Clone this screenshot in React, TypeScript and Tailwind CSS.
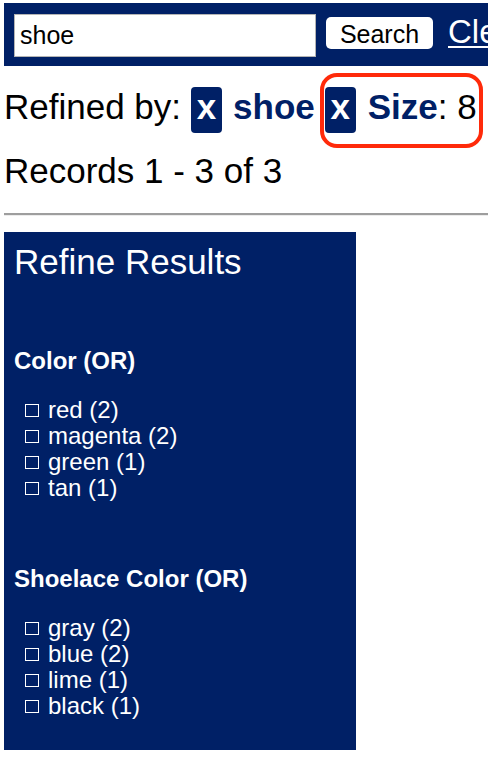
import React from "react";

const navy = "bg-[#002066]";

const colorFacets = [
  { label: "red", count: 2 },
  { label: "magenta", count: 2 },
  { label: "green", count: 1 },
  { label: "tan", count: 1 },
];

const laceFacets = [
  { label: "gray", count: 2 },
  { label: "blue", count: 2 },
  { label: "lime", count: 1 },
  { label: "black", count: 1 },
];

const FacetList = ({ items }: { items: { label: string; count: number }[] }) => (
  <ul className="mt-[22px]">
    {items.map((item) => (
      <li key={item.label} className="flex items-center h-[26px] text-[24px] leading-[26px] text-white">
        <span className="ml-[11px] mr-[9px] w-[14px] h-[13px] border border-white shrink-0" />
        <span>
          {item.label} ({item.count})
        </span>
      </li>
    ))}
  </ul>
);

const Badge = ({ className = "" }: { className?: string }) => (
  <span
    className={`${navy} ${className} block w-[31px] h-[46px] rounded-[4px] text-white font-bold text-center text-[35px] leading-[40px]`}
  >
    x
  </span>
);

export default function App() {
  return (
    <div
      className="w-full min-h-screen overflow-hidden bg-white pl-[4px] pt-[3px] text-black whitespace-nowrap"
      style={{ fontFamily: '"Liberation Sans", Arial, sans-serif' }}
    >
      {/* search bar */}
      <div className={`${navy} h-[63px] flex items-start overflow-hidden`}>
        <input
          readOnly
          value="shoe"
          className="ml-[10px] mt-[11px] w-[302px] h-[43px] shrink-0 bg-white border-[1.5px] border-[#b4b4b4] px-[5px] text-[25px] text-black outline-none"
        />
        <button className="ml-[10px] mt-[14px] w-[107px] h-[32px] shrink-0 bg-white rounded-[5px] text-[25px] leading-[34px] text-black">
          Search
        </button>
        <a href="#" className="ml-[15px] mt-[9px] text-[33px] leading-[40px] text-white underline underline-offset-[3px] decoration-[2px]">
          Clear
        </a>
      </div>

      {/* refined by */}
      <div className="relative mt-[21px] flex items-start text-[35px] leading-[40px]">
        <span>Refined by:</span>
        <Badge className="ml-[10px]" />
        <span className="ml-[11px] font-bold text-[#002066]">shoe</span>
        <Badge className="ml-[10px]" />
        <span className="ml-[12px]">
          <b className="text-[#002066]">Size</b>: 8
        </span>
        <div className="absolute left-[316px] top-[-14px] w-[163px] h-[75px] border-[4px] border-[#ff2a0a] rounded-[17px]" />
      </div>

      <div className="mt-[18px] text-[35px] leading-[40px]">Records 1 - 3 of 3</div>

      <div className="mt-[22px] h-[3px] border-t-2 border-[#9e9e9e] border-b border-b-[#ececec]" />

      {/* refine panel */}
      <div className={`${navy} mt-[16px] w-[352px] px-[10px] pt-[10px] pb-[31px] text-white`}>
        <h2 className="text-[35px] leading-[40px]">Refine Results</h2>

        <h3 className="mt-[65px] text-[24px] leading-[28px] font-bold">Color (OR)</h3>
        <FacetList items={colorFacets} />

        <h3 className="mt-[64px] text-[24px] leading-[28px] font-bold">Shoelace Color (OR)</h3>
        <FacetList items={laceFacets} />
      </div>
    </div>
  );
}
